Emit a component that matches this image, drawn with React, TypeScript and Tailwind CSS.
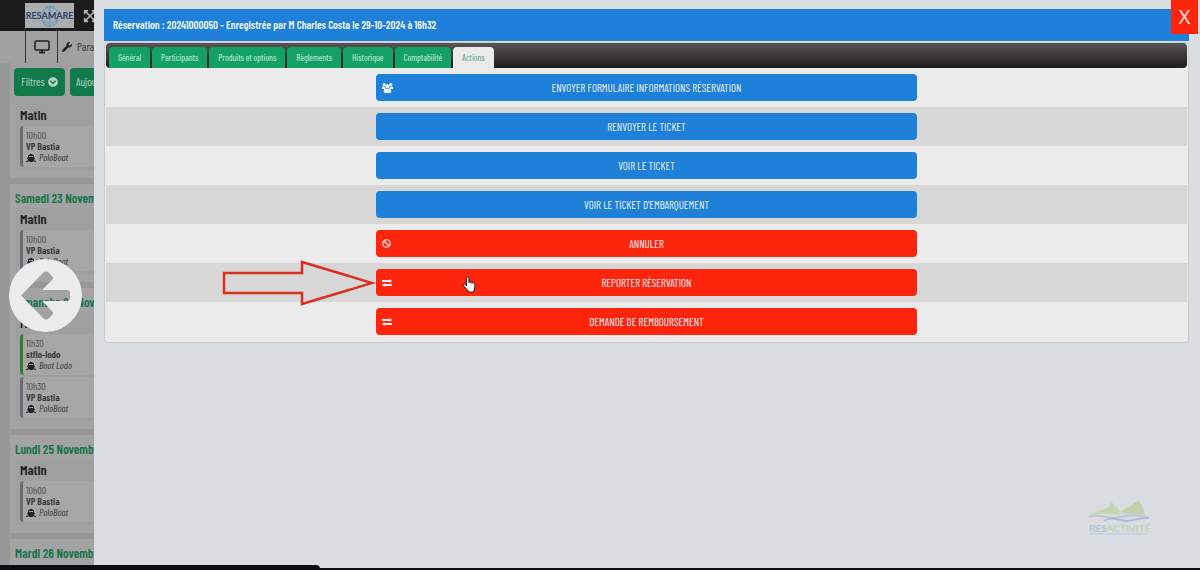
import type { ReactNode } from 'react';
import clsx from 'clsx';
import { FaBan, FaChevronCircleDown, FaExpandArrowsAlt, FaShip, FaWrench } from 'react-icons/fa';

interface Trip {
  time: string;
  name: string;
  boat: string;
  confirmed?: boolean;
}

interface Day {
  label?: string;
  trips: Trip[];
}

interface Action {
  label: string;
  icon?: ReactNode;
  danger?: boolean;
  highlighted?: boolean;
}

function GroupIcon() {
  return (
    <svg viewBox="0 0 20 18" className="h-[10px] w-[11px]" fill="currentColor" aria-hidden="true">
      <circle cx="4" cy="3" r="3" />
      <circle cx="16" cy="3" r="3" />
      <circle cx="10" cy="6" r="4" />
      <path d="M0 11V8c0-2 2-2 5-1 0 2 1 3 2 4zM20 11V8c0-2-2-2-5-1 0 2-1 3-2 4z" />
      <path d="M3 15c0-4 2-6 4-5q3 2 6 0c2-1 4 1 4 5 0 2-1 3-3 3H6c-2 0-3-1-3-3z" />
    </svg>
  );
}

function ExchangeIcon() {
  return (
    <svg viewBox="0 0 20 16" className="h-2 w-[10px]" fill="currentColor" aria-hidden="true">
      <path d="M0 2h15V0l5 4-5 4V6H0zM20 10H5V8l-5 4 5 4v-2h15z" />
    </svg>
  );
}

const days: Day[] = [
  { trips: [{ time: '10h00', name: 'VP Bastia', boat: 'PoloBoat' }] },
  { label: 'Samedi 23 Novembre', trips: [{ time: '10h00', name: 'VP Bastia', boat: 'PoloBoat' }] },
  {
    label: 'Dimanche 24 Novembre',
    trips: [
      { time: '11h30', name: 'stflo-lodo', boat: 'Boat Lodo', confirmed: true },
      { time: '10h30', name: 'VP Bastia', boat: 'PoloBoat' },
    ],
  },
  { label: 'Lundi 25 Novembre', trips: [{ time: '10h00', name: 'VP Bastia', boat: 'PoloBoat' }] },
  { label: 'Mardi 26 Novembre', trips: [] },
];

const tabs = ['Général', 'Participants', 'Produits et options', 'Règlements', 'Historique', 'Comptabilité', 'Actions'];

const actions: Action[] = [
  { label: 'Envoyer formulaire informations réservation', icon: <GroupIcon /> },
  { label: 'Renvoyer le ticket' },
  { label: 'Voir le ticket' },
  { label: "Voir le ticket d'embarquement" },
  { label: 'Annuler', icon: <FaBan className="size-[9px]" />, danger: true },
  { label: 'Reporter réservation', icon: <ExchangeIcon />, danger: true, highlighted: true },
  { label: 'Demande de remboursement', icon: <ExchangeIcon />, danger: true },
];

function ResamareLogo() {
  return (
    <svg viewBox="0 0 49 25" className="h-[25px] w-[49px] bg-[#acadaf]" role="img" aria-label="Resamare">
      <g fill="none" stroke="#6f9dbf" strokeWidth="1.5">
        <circle cx="25" cy="12" r="8" strokeDasharray="3 1" />
        <path d="M25 2v21M20 4h10M17 17c2 5 5 6 8 6s6-1 8-6" />
      </g>
      <text x="24.5" y="16" textAnchor="middle" fontSize="9" fontWeight="bold" fill="#26446c" fontFamily="Lato, sans-serif">
        RESAMARE
      </text>
    </svg>
  );
}

function ResactiviteLogo() {
  return (
    <svg viewBox="0 0 62 36" className="h-9 w-[62px] opacity-60" role="img" aria-label="Resactivité">
      <path d="M2 15c4-3 8-3 10-5l5-1 4-2 3-5 3 5 3 2 2 6c-9-1-18-2-30 0z" fill="#b9cf93" />
      <path d="M31 12c5-1 7-5 11-5l4-4 4-3 4 5 2 5 1 4c-9 2-16 0-26-2z" fill="#b4cb89" />
      <path d="M1 17c9-4 17 2 26 1s16-5 31-1" fill="none" stroke="#a6b8d3" strokeWidth="2" />
      <path d="M16 21c8-6 16 1 24 0s14-4 21-3" fill="none" stroke="#8fa5cc" strokeWidth="2" />
      <text x="1" y="32" fontSize="10" fontWeight="bold" fontFamily="Lato, sans-serif" fill="#93b3dc">
        RES<tspan fill="#b7cf9a">ACTIVITÉ</tspan>
      </text>
      <path d="M1 34h59" stroke="#a4bfe0" />
    </svg>
  );
}

function TripCard({ trip }: { trip: Trip }) {
  return (
    <li
      className={clsx(
        'h-[41px] rounded-sm border-l-3 bg-[#a6a6a6] pl-[3px] pt-1 text-[10px] leading-[11px] text-[#333]',
        trip.confirmed ? 'border-[#2a7d33]' : 'border-[#6a6a74]'
      )}
    >
      <p className="text-[#4b4b4b]">{trip.time}</p>
      <p className="font-semibold">{trip.name}</p>
      <p className="flex items-center gap-[3px] italic">
        <FaShip className="size-[10px] text-[#222]" />
        {trip.boat}
      </p>
    </li>
  );
}

function DayPanel({ day }: { day: Day }) {
  return (
    <section className="bg-[#a3a3a3] px-[5px] pb-2">
      {day.label && <h2 className="pt-1 text-[13px] font-semibold leading-5 text-[#127349]">{day.label}</h2>}
      {day.trips.length > 0 && (
        <div className="bg-[#9f9f9f] px-[5px] pb-[3px]">
          <h3 className="text-[14px] font-semibold leading-[22px] text-[#1c1c1c]">Matin</h3>
          <ul className="flex flex-col gap-[2px]">
            {day.trips.map((trip) => (
              <TripCard key={trip.time} trip={trip} />
            ))}
          </ul>
        </div>
      )}
    </section>
  );
}

function Planning() {
  return (
    <div className="h-screen overflow-hidden bg-[#979797]">
      <header className="flex h-[31px] items-center gap-[9px] bg-[#1b1b1b] pl-[25px]">
        <ResamareLogo />
        <FaExpandArrowsAlt className="size-[14px] text-[#b5b5b5]" />
      </header>
      <nav className="flex h-8 bg-[#a1a1a1] pl-[25px] text-[11px] text-[#333]">
        <button type="button" aria-label="Écran" className="flex w-[33px] items-center justify-center border-x border-[#333]">
          <svg viewBox="0 0 16 14" className="h-[14px] w-4" fill="none" stroke="#222" strokeWidth="1.5">
            <rect x="1" y="1" width="14" height="9" rx="1" />
            <path d="M5 12.5h6M8 10v3" strokeWidth="2" />
          </svg>
        </button>
        <a href="#parametres" className="flex items-center gap-[5px] pl-1">
          <FaWrench className="size-[10px] text-[#222]" />
          Paramètres
        </a>
      </nav>
      <main className="ml-[10px]">
        <div className="flex h-[41px] gap-[5px] bg-[#a0a0a0] px-1 pb-2 pt-[5px] text-[11px] text-[#b9d3c6]">
          <button type="button" className="flex w-[51px] items-center justify-center gap-[3px] rounded bg-[#117a4b]">
            Filtres
            <FaChevronCircleDown className="size-[10px]" />
          </button>
          <button type="button" className="rounded bg-[#117a4b] px-[6px]">
            Aujourd'hui
          </button>
        </div>
        <div className="flex flex-col gap-[6px]">
          {days.map((day, i) => (
            <DayPanel key={i} day={day} />
          ))}
        </div>
      </main>
    </div>
  );
}

// Outlined arrow pointing at the highlighted action
function Pointer() {
  return (
    <svg
      viewBox="0 0 154 46"
      className="pointer-events-none absolute right-full top-1/2 h-[46px] w-[154px] -translate-y-1/2"
      fill="none"
      stroke="#d9301f"
      strokeWidth="2.5"
      aria-hidden="true"
    >
      <path d="M2 13h78V2l70 21-70 21V33H2z" />
    </svg>
  );
}

function HandCursor() {
  return (
    <svg viewBox="0 0 14 17" className="pointer-events-none absolute left-[86px] top-[7px] h-[17px] w-[14px]" aria-hidden="true">
      <path
        d="M4.5 10V2.2a1.2 1.2 0 0 1 2.4 0V6.500c.5-.8 1.800-.6 2 .3.600-.7 1.800-.4 2 .5.800-.5 1.900 0 1.900 1v3.200c0 1-.4 1.800-.8 2.500v2H6v-1.500L1.300 9.500c-.6-1 .7-2 1.600-1.200z"
        fill="#fff"
        stroke="#222"
      />
    </svg>
  );
}

function ActionRow({ action }: { action: Action }) {
  return (
    <li className="flex justify-center py-[6px] odd:bg-[#ebebeb] even:bg-[#d7d7d7]">
      <div className="relative w-1/2">
        <button
          type="button"
          className={clsx(
            'relative block h-[27px] w-full rounded pt-px text-[11px] uppercase text-[#e9f0f7]',
            action.danger ? 'bg-[#fd260d]' : 'bg-[#1e80d9]'
          )}
        >
          <span className="absolute inset-y-0 left-[6px] flex items-center">{action.icon}</span>
          {action.label}
        </button>
        {action.highlighted && (
          <>
            <Pointer />
            <HandCursor />
          </>
        )}
      </div>
    </li>
  );
}

function ReservationDrawer() {
  return (
    <div
      role="dialog"
      aria-labelledby="reservation-title"
      className="fixed inset-y-0 left-[94px] right-0 bg-[#d9dce0] pl-[10px] pr-[11px] pt-[9px]"
    >
      <h1 id="reservation-title" className="bg-[#1e80d9] px-[9px] text-[11px] font-semibold leading-8 text-[#eef5fb]">
        Réservation : 20241000050 - Enregistrée par M Charles Costa le 29-10-2024 à 16h32
      </h1>
      <div className="mt-px rounded border border-[#c9cbce] bg-[#ebebeb] px-px pb-px">
        <div role="tablist" className="flex h-[25px] items-end gap-[2px] rounded bg-linear-to-b from-[#585656] to-[#1f1c1c] px-[3px]">
          {tabs.map((tab) => (
            <button
              key={tab}
              type="button"
              role="tab"
              aria-selected={tab === 'Actions'}
              className={clsx(
                'h-[21px] rounded-t px-[9px] text-[9px]',
                tab === 'Actions' ? 'bg-[#ebebeb] text-[#4d9c7b]' : 'bg-[#13a166] text-[#d5f0e4]'
              )}
            >
              {tab}
            </button>
          ))}
        </div>
        <ul>
          {actions.map((action) => (
            <ActionRow key={action.label} action={action} />
          ))}
        </ul>
      </div>
      <button
        type="button"
        aria-label="Fermer"
        className="absolute right-[2px] top-0 h-[34px] w-[27px] bg-[#fd260d] font-['Open_Sans',sans-serif] text-[20px] text-[#fbeceb]"
      >
        X
      </button>
      <div className="absolute bottom-[34px] right-[50px]">
        <ResactiviteLogo />
      </div>
    </div>
  );
}

export default function App() {
  return (
    <div className="font-['Barlow_Condensed','Liberation_Sans_Narrow','Liberation_Sans',sans-serif]">
      <Planning />
      <ReservationDrawer />
      <button type="button" aria-label="Précédent" className="fixed left-[9px] top-[259px] size-[73px]">
        <svg viewBox="0 0 73 73" aria-hidden="true">
          <mask id="arrow-hole">
            <rect width="73" height="73" fill="#fff" />
            <path
              d="M12 36.500L34 14q3-3 6 0l3 3q2 2 0 4L33 31H58q3 0 3 3v5q0 3-3 3H33L43 52q2 2 0 4l-3 3q-3 3-6 0z"
              fill="#000"
            />
          </mask>
          <circle cx="36.500" cy="36.500" r="36.500" fill="#ececec" mask="url(#arrow-hole)" />
        </svg>
      </button>
      <div className="fixed inset-x-0 bottom-0 flex items-end">
        <div className="h-[5px] w-80 rounded-tr-sm bg-[#0b0d10]" />
        <div className="h-[2px] grow bg-[#0b0d10]" />
      </div>
    </div>
  );
}
